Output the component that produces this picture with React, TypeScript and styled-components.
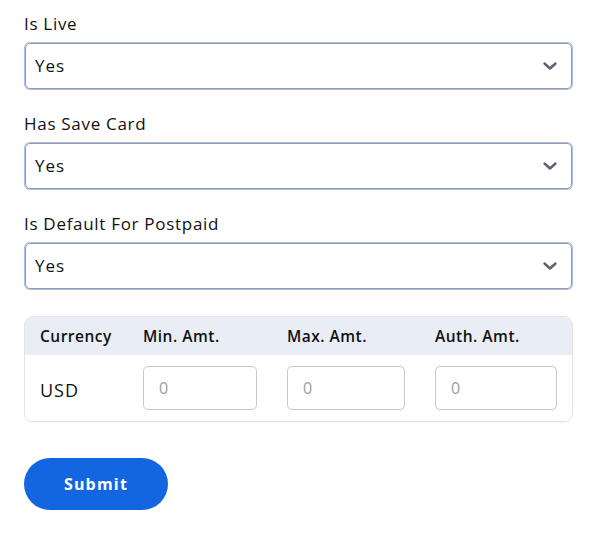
import React from "react";
import styled, { createGlobalStyle } from "styled-components";

const Global = createGlobalStyle`
  html, body { margin: 0; padding: 0; background: #ffffff; }
  body { font-family: "Open Sans", "Noto Sans", Arial, sans-serif; color: #111; }
  * { box-sizing: border-box; }
`;

const Page = styled.div`
  width: 605px;
  padding: 12px 32px 24px 24px;
  display: flex;
  flex-direction: column;
`;

const Field = styled.div`
  display: flex;
  flex-direction: column;
  gap: 7px;
  margin-bottom: 23px;
`;

const Label = styled.label`
  font-size: 17px;
  line-height: 24px;
  letter-spacing: 0.7px;
  color: #111;
`;

const SelectBox = styled.div`
  position: relative;
  height: 46px;
  margin: 0 1px;
  border: 1px solid #9a9a9a;
  border-radius: 5px;
  box-shadow: 0 0 0 1px #a9bdf0;
  display: flex;
  align-items: center;
  padding: 0 13px 1px 9px;
  justify-content: space-between;
  font-size: 17px;
  letter-spacing: 1px;
  color: #111;
`;

const Chevron = styled.svg`
  width: 16px;
  height: 16px;
  flex: none;
`;

const TableCard = styled.div`
  margin-top: 4px;
  border: 1px solid #e3e3e3;
  border-radius: 9px;
  overflow: hidden;
  box-shadow: 0 1px 1px rgba(0, 0, 0, 0.06);
`;

const Row = styled.div<{ $head?: boolean }>`
  display: grid;
  grid-template-columns: 73px 114px 118px 122px;
  column-gap: 30px;
  align-items: center;
  padding: ${(p) => (p.$head ? "0 15px 0 15px" : "10px 15px 10px 15px")};
  height: ${(p) => (p.$head ? "38px" : "66px")};
  background: ${(p) => (p.$head ? "#e9edf5" : "#ffffff")};
`;

const HeadCell = styled.div`
  font-size: 15.5px;
  font-weight: 600;
  letter-spacing: 0.5px;
  white-space: nowrap;
  color: #111;
`;

const Currency = styled.div`
  font-size: 18px;
  letter-spacing: 1px;
  padding-top: 3px;
  color: #111;
`;

const AmountInput = styled.input`
  width: 100%;
  height: 44px;
  border: 1px solid #c9c9c9;
  border-radius: 5px;
  padding: 0 15px;
  font-family: inherit;
  font-size: 16px;
  color: #111;
  outline: none;
  &::placeholder { color: #9c9c9c; }
`;

const Submit = styled.button`
  margin-top: 36px;
  width: 144px;
  height: 52px;
  border: none;
  border-radius: 26px;
  background: #1366e0;
  color: #ffffff;
  font-family: inherit;
  font-size: 16px;
  font-weight: 700;
  letter-spacing: 1.2px;
  cursor: pointer;
`;

const Select = ({ value }: { value: string }) => (
  <SelectBox>
    <span>{value}</span>
    <Chevron viewBox="0 0 16 16" fill="none">
      <path d="M2.5 5.5 L8 10.5 L13.5 5.5" stroke="#5c6270" strokeWidth="2.4" strokeLinecap="round" strokeLinejoin="round" />
    </Chevron>
  </SelectBox>
);

export default function App() {
  return (
    <>
      <Global />
      <Page>
        <Field>
          <Label>Is Live</Label>
          <Select value="Yes" />
        </Field>
        <Field>
          <Label>Has Save Card</Label>
          <Select value="Yes" />
        </Field>
        <Field>
          <Label>Is Default For Postpaid</Label>
          <Select value="Yes" />
        </Field>
        <TableCard>
          <Row $head>
            <HeadCell>Currency</HeadCell>
            <HeadCell>Min. Amt.</HeadCell>
            <HeadCell>Max. Amt.</HeadCell>
            <HeadCell>Auth. Amt.</HeadCell>
          </Row>
          <Row>
            <Currency>USD</Currency>
            <AmountInput placeholder="0" />
            <AmountInput placeholder="0" />
            <AmountInput placeholder="0" />
          </Row>
        </TableCard>
        <div>
          <Submit>Submit</Submit>
        </div>
      </Page>
    </>
  );
}
